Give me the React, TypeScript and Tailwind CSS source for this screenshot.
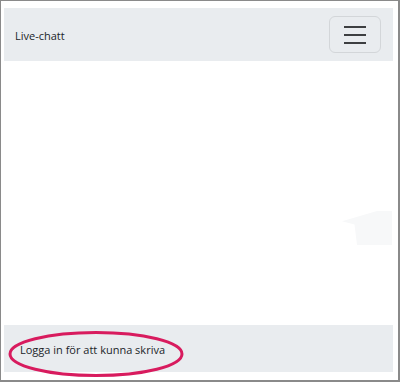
export default function App() {
  return (
    <div
      className="w-[400px] h-[382px] bg-white border border-[#8a8a8a] border-b-2 border-r-2 relative flex flex-col overflow-hidden"
      style={{ fontFamily: '"Open Sans", "Noto Sans", sans-serif' }}
    >
      {/* header bar */}
      <div className="ml-[3px] mr-[5px] mt-[7px] h-[53px] bg-[#e9ecef] flex items-center justify-between pl-[11px] pr-[12px]">
        <span className="text-[11px] text-[#212529] pt-[3px]">Live-chatt</span>
        <button className="w-[52px] h-[37px] rounded-[6px] border border-[#d3d6d9] flex flex-col items-center justify-center gap-[6px]">
          <span className="block w-[22px] h-[2px] bg-[#3d3f41]" />
          <span className="block w-[22px] h-[2px] bg-[#3d3f41]" />
          <span className="block w-[22px] h-[2px] bg-[#3d3f41]" />
        </button>
      </div>

      {/* message area */}
      <div className="flex-1 relative">
        <div className="absolute right-[6px] top-[150px] w-[50px] h-[34px] bg-[#f7f8f9] [clip-path:polygon(0_30%,70%_0,100%_0,100%_100%,30%_100%,25%_40%)]" />
      </div>

      {/* footer */}
      <div className="ml-[3px] mr-[5px] mb-[8px] h-[47px] bg-[#e9ecef] flex items-center pl-[16px] pt-[3px]">
        <span className="text-[11px] text-[#212529]">Logga in för att kunna skriva</span>
      </div>

      {/* highlight ring */}
      <svg className="absolute left-0 top-0 pointer-events-none" width="400" height="382">
        <ellipse cx="95" cy="353" rx="86" ry="21.5" fill="none" stroke="#d81b5e" strokeWidth="3" />
      </svg>
    </div>
  );
}
